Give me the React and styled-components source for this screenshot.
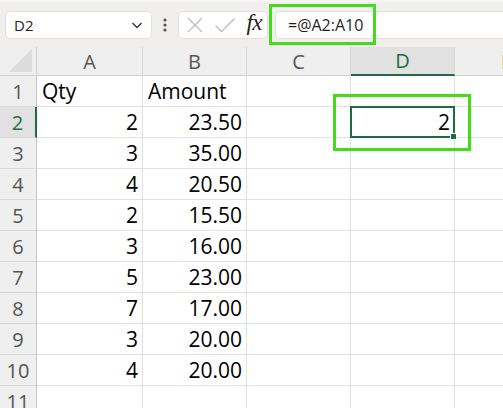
import styled, { createGlobalStyle } from "styled-components";

const GlobalStyle = createGlobalStyle`
  html, body {
    margin: 0;
    padding: 0;
    background: #ffffff;
    overflow: hidden;
  }
  body {
    font-family: "Open Sans", "Noto Sans", sans-serif;
  }
`;

const columns = ["A", "B", "C", "D", "E"];

const rows = [
  ["Qty", "Amount"],
  [2, "23.50"],
  [3, "35.00"],
  [4, "20.50"],
  [2, "15.50"],
  [3, "16.00"],
  [5, "23.00"],
  [7, "17.00"],
  [3, "20.00"],
  [4, "20.00"],
  ["", ""],
];

const Page = styled.div`
  width: 503px;
  height: 408px;
  overflow: hidden;
  background: #fff;
`;

const Toolbar = styled.div`
  height: 47px;
  box-sizing: border-box;
  background: #f1efed;
  border-top: 2px solid #f6f5f4;
  display: flex;
  align-items: center;
  padding-left: 5px;
  overflow: hidden;
`;

const Box = styled.div`
  height: 28px;
  box-sizing: border-box;
  background: #fff;
  border: 1px solid #e3e1df;
  border-radius: 5px;
  display: flex;
  align-items: center;
  flex-shrink: 0;
`;

const NameBox = styled(Box)`
  width: 147px;
  padding: 0 7px 0 8px;
  justify-content: space-between;
  font-size: 15px;
  color: #1f1f1f;
`;

const Dots = styled.div`
  width: 26px;
  display: flex;
  justify-content: center;
  flex-shrink: 0;
`;

const IconBox = styled(Box)`
  width: 90px;
  padding: 0 5px 0 7px;
  justify-content: space-between;
`;

const FormulaWrap = styled.div`
  position: relative;
  margin-left: 7px;
  flex: 1;
  min-width: 260px;
`;

const FormulaBox = styled(Box)`
  width: 100%;
  padding-left: 12px;
  font-size: 16px;
  color: #1f1f1f;
  border-right: none;
  border-radius: 5px 0 0 5px;
`;

const Highlight = styled.div`
  position: absolute;
  left: ${(p) => p.$left}px;
  top: ${(p) => p.$top}px;
  width: ${(p) => p.$width}px;
  height: ${(p) => p.$height}px;
  box-sizing: border-box;
  border: 3px solid #45da1f;
  pointer-events: none;
  z-index: 3;
`;

const Sheet = styled.div`
  display: grid;
  grid-template-columns: 37px 106px 104px 104px 104px 104px;
  grid-template-rows: 29px;
  grid-auto-rows: 31px;
`;

const Corner = styled.div`
  background: #efefef;
  border-right: 1px solid #d0d0d0;
  border-bottom: 1px solid #d0d0d0;
  display: flex;
  align-items: flex-end;
  justify-content: flex-end;
  padding: 0 4px 3px 0;
`;

const ColHead = styled.div`
  box-sizing: border-box;
  background: ${(p) => (p.$active ? "#e1e1e1" : "#efefef")};
  border-right: 1px solid #dadada;
  border-bottom: ${(p) => (p.$active ? "2px solid #1e6d41" : "1px solid #d0d0d0")};
  color: ${(p) => (p.$active ? "#1e6d41" : "#555")};
  font-size: 20px;
  display: flex;
  align-items: center;
  justify-content: center;
  line-height: 1;
  padding-top: 1px;
`;

const RowHead = styled.div`
  box-sizing: border-box;
  background: ${(p) => (p.$active ? "#e1e1e1" : "#efefef")};
  border-right: ${(p) => (p.$active ? "2px solid #1e6d41" : "1px solid #c4c4c4")};
  border-bottom: 1px solid #dadada;
  color: ${(p) => (p.$active ? "#1e6d41" : "#555")};
  font-size: 20px;
  display: flex;
  align-items: flex-end;
  justify-content: center;
  line-height: 1;
  padding-bottom: 4px;
`;

const Cell = styled.div`
  position: relative;
  box-sizing: border-box;
  border-right: 1px solid #e1e1e1;
  border-bottom: 1px solid #e1e1e1;
  font-size: 21px;
  color: #000;
  display: flex;
  align-items: flex-end;
  justify-content: ${(p) => (p.$num ? "flex-end" : "flex-start")};
  padding: 0 4px 4px 5px;
  line-height: 1;
  white-space: nowrap;
`;

const Selection = styled.div`
  position: absolute;
  left: -1px;
  top: -1px;
  right: -1px;
  bottom: -1px;
  border: 2px solid #1e6d41;
  pointer-events: none;
  z-index: 2;
`;

const Handle = styled.div`
  position: absolute;
  right: -4px;
  bottom: -4px;
  width: 5px;
  height: 5px;
  background: #1e6d41;
  border: 1px solid #fff;
`;

const Fx = styled.span`
  font-family: "Liberation Serif", "DejaVu Serif", serif;
  font-style: italic;
  font-size: 23px;
  color: #222;
  line-height: 1;
  letter-spacing: -0.5px;
  margin-top: -4px;
`;

const ChevronDown = () => (
  <svg width="14" height="14" viewBox="0 0 14 14">
    <path d="M2.5 5 L7 9.5 L11.5 5" fill="none" stroke="#333" strokeWidth="1.3" />
  </svg>
);

const VerticalDots = () => (
  <svg width="4" height="14" viewBox="0 0 4 14">
    <circle cx="2" cy="2" r="1.6" fill="#555" />
    <circle cx="2" cy="7" r="1.6" fill="#555" />
    <circle cx="2" cy="12" r="1.6" fill="#555" />
  </svg>
);

const CancelIcon = () => (
  <svg width="18" height="18" viewBox="0 0 18 18">
    <path d="M2 2 L16 16 M16 2 L2 16" stroke="#bdbdbd" strokeWidth="1.3" fill="none" />
  </svg>
);

const EnterIcon = () => (
  <svg width="22" height="18" viewBox="0 0 22 18">
    <path d="M1.5 9.5 L7.5 15.5 L20.5 2.5" stroke="#bdbdbd" strokeWidth="1.3" fill="none" />
  </svg>
);

const CornerTriangle = () => (
  <svg width="23" height="23" viewBox="0 0 23 23">
    <polygon points="23,0 23,23 0,23" fill="#dcdcdc" />
  </svg>
);

function App() {
  return (
    <Page>
      <GlobalStyle />
      <Toolbar>
        <NameBox>
          <span>D2</span>
          <ChevronDown />
        </NameBox>
        <Dots>
          <VerticalDots />
        </Dots>
        <IconBox>
          <CancelIcon />
          <EnterIcon />
          <Fx>fx</Fx>
        </IconBox>
        <FormulaWrap>
          <FormulaBox>=@A2:A10</FormulaBox>
          <Highlight $left={-6} $top={-7} $width={107} $height={41} />
        </FormulaWrap>
      </Toolbar>

      <Sheet>
        <Corner>
          <CornerTriangle />
        </Corner>
        {columns.map((c) => (
          <ColHead key={c} $active={c === "D"}>
            {c}
          </ColHead>
        ))}

        {rows.map((r, i) => {
          const rowNum = i + 1;
          return [
            <RowHead key={`h${rowNum}`} $active={rowNum === 2}>
              {rowNum}
            </RowHead>,
            <Cell key={`a${rowNum}`} $num={typeof r[0] === "number"}>
              {r[0]}
            </Cell>,
            <Cell key={`b${rowNum}`} $num={rowNum > 1}>
              {r[1]}
            </Cell>,
            <Cell key={`c${rowNum}`} />,
            <Cell key={`d${rowNum}`} $num>
              {rowNum === 2 && (
                <>
                  2
                  <Selection>
                    <Handle />
                  </Selection>
                  <Highlight $left={-18} $top={-13} $width={138} $height={57} />
                </>
              )}
            </Cell>,
            <Cell key={`e${rowNum}`} />,
          ];
        })}
      </Sheet>
    </Page>
  );
}

export default App;
